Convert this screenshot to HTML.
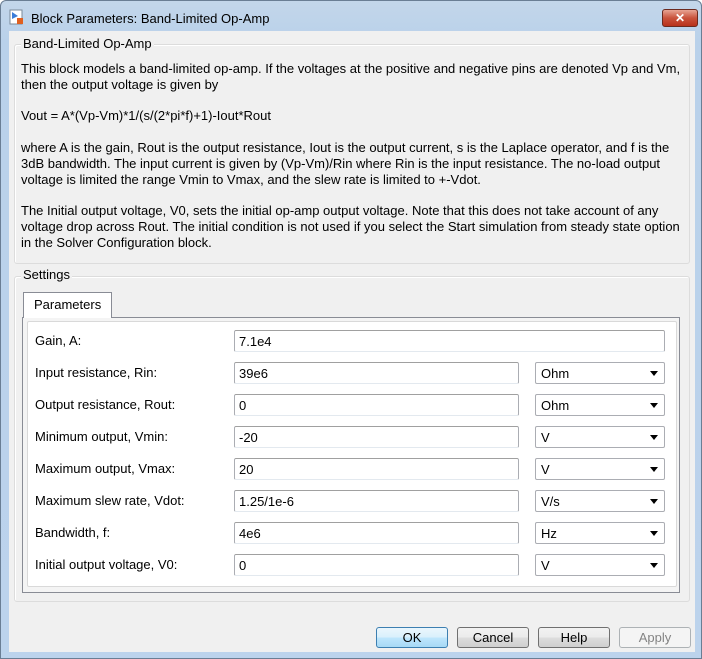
<!DOCTYPE html>
<html><head><style>
*{margin:0;padding:0;box-sizing:border-box}
body{width:702px;height:659px;overflow:hidden;font-family:"Liberation Sans",sans-serif;font-size:13px;color:#000;background:#fff}
.win{position:absolute;left:0;top:0;width:702px;height:659px;border:1px solid #6a7e94;border-radius:6px 6px 0 0;background:linear-gradient(#c3d6ea,#b9d1ea 40px,#bcd3ec)}
.title{position:absolute;left:30px;top:10px;font-size:13px;color:#000}
.icon{position:absolute;left:8px;top:8px;width:16px;height:16px}
.close{position:absolute;left:661px;top:8px;width:36px;height:18px;border:1px solid #6b2a1f;border-radius:3px;background:linear-gradient(#e8a493,#c9533c 50%,#b8321c);color:#fff;text-align:center;font-weight:bold;font-size:12px;line-height:16px}
.client{position:absolute;left:8px;top:30px;width:686px;height:621px;background:#f0f0f0}
.grp{position:absolute;border:1px solid #dcdcdc;border-radius:3px;box-shadow:inset 1px 1px 0 #fff}
.lbl{position:absolute;background:#f0f0f0;padding:0 2px}
.t{position:absolute;left:20px;white-space:nowrap}
.tab{position:absolute;left:22px;top:291px;width:89px;height:26px;border:1px solid #898c95;border-bottom:none;background:#fff;padding:4px 0 0 10px}
.panel{position:absolute;left:21px;top:316px;width:658px;height:276px;border:1px solid #898c95;background:#f4f4f4}
.inner{position:absolute;left:26px;top:320px;width:650px;height:266px;border:1px solid #d9d9d9;background:#fff;border-radius:2px}
.row{position:absolute;left:34px}
.in{position:absolute;height:22px;border:1px solid #abadb3;border-radius:2px;background:#fff;padding:3px 0 0 4px;border-top-color:#a0a0a0;border-bottom-color:#e3e9ef}
.dd{position:absolute;left:534px;width:130px;height:22px;border:1px solid #abadb3;border-radius:2px;background:#fff;padding:3px 0 0 5px}
.dd:after{content:"";position:absolute;right:6px;top:8px;border:4px solid transparent;border-top:5px solid #000;border-bottom:0}
.btn{position:absolute;top:626px;width:72px;height:21px;border:1px solid #707070;border-radius:3px;background:linear-gradient(#f2f2f2,#ebebeb 50%,#dddddd 51%,#cfcfcf);text-align:center;line-height:19px}
</style></head><body>
<div class="win">
<svg class="icon" viewBox="0 0 16 16"><rect x="1" y="1" width="12" height="14" fill="#fff" stroke="#7a8a9a"/><path d="M3 3 L9 7 L3 10Z" fill="#3b7dd8"/><rect x="8" y="9" width="6" height="6" fill="#e06020"/></svg>
<div class="title">Block Parameters: Band-Limited Op-Amp</div>
<div class="close">✕</div>
<div class="client"></div>
<div class="grp" style="left:13px;top:43px;width:676px;height:220px"></div>
<div class="lbl" style="left:20px;top:35px">Band-Limited Op-Amp</div>
<div class="t" style="top:60px">This block models a band-limited op-amp. If the voltages at the positive and negative pins are denoted Vp and Vm,</div>
<div class="t" style="top:76px">then the output voltage is given by</div>
<div class="t" style="top:107px">Vout = A*(Vp-Vm)*1/(s/(2*pi*f)+1)-Iout*Rout</div>
<div class="t" style="top:139px">where A is the gain, Rout is the output resistance, Iout is the output current, s is the Laplace operator, and f is the</div>
<div class="t" style="top:155px">3dB bandwidth. The input current is given by (Vp-Vm)/Rin where Rin is the input resistance. The no-load output</div>
<div class="t" style="top:171px">voltage is limited the range Vmin to Vmax, and the slew rate is limited to +-Vdot.</div>
<div class="t" style="top:202px">The Initial output voltage, V0, sets the initial op-amp output voltage. Note that this does not take account of any</div>
<div class="t" style="top:218px">voltage drop across Rout. The initial condition is not used if you select the Start simulation from steady state option</div>
<div class="t" style="top:234px">in the Solver Configuration block.</div>
<div class="grp" style="left:13px;top:275px;width:676px;height:326px"></div>
<div class="lbl" style="left:20px;top:266px">Settings</div>
<div class="panel"></div>
<div class="inner"></div>
<div class="tab">Parameters</div>

<div class="row" style="top:332px">Gain, A:</div>
<div class="in" style="left:233px;top:329px;width:431px">7.1e4</div>

<div class="row" style="top:364px">Input resistance, Rin:</div>
<div class="in" style="left:233px;top:361px;width:285px">39e6</div><div class="dd" style="top:361px">Ohm</div>

<div class="row" style="top:396px">Output resistance, Rout:</div>
<div class="in" style="left:233px;top:393px;width:285px">0</div><div class="dd" style="top:393px">Ohm</div>

<div class="row" style="top:428px">Minimum output, Vmin:</div>
<div class="in" style="left:233px;top:425px;width:285px">-20</div><div class="dd" style="top:425px">V</div>

<div class="row" style="top:460px">Maximum output, Vmax:</div>
<div class="in" style="left:233px;top:457px;width:285px">20</div><div class="dd" style="top:457px">V</div>

<div class="row" style="top:492px">Maximum slew rate, Vdot:</div>
<div class="in" style="left:233px;top:489px;width:285px">1.25/1e-6</div><div class="dd" style="top:489px">V/s</div>

<div class="row" style="top:524px">Bandwidth, f:</div>
<div class="in" style="left:233px;top:521px;width:285px">4e6</div><div class="dd" style="top:521px">Hz</div>

<div class="row" style="top:556px">Initial output voltage, V0:</div>
<div class="in" style="left:233px;top:553px;width:285px">0</div><div class="dd" style="top:553px">V</div>

<div class="btn" style="left:375px;border-color:#3c7fb1;background:linear-gradient(#eaf6fd,#d9f0fc 50%,#bee6fd 51%,#a7d9f5)">OK</div>
<div class="btn" style="left:456px">Cancel</div>
<div class="btn" style="left:537px">Help</div>
<div class="btn" style="left:618px;background:#f4f4f4;border-color:#adb2b5;color:#838383">Apply</div>
</div>
</body></html>
